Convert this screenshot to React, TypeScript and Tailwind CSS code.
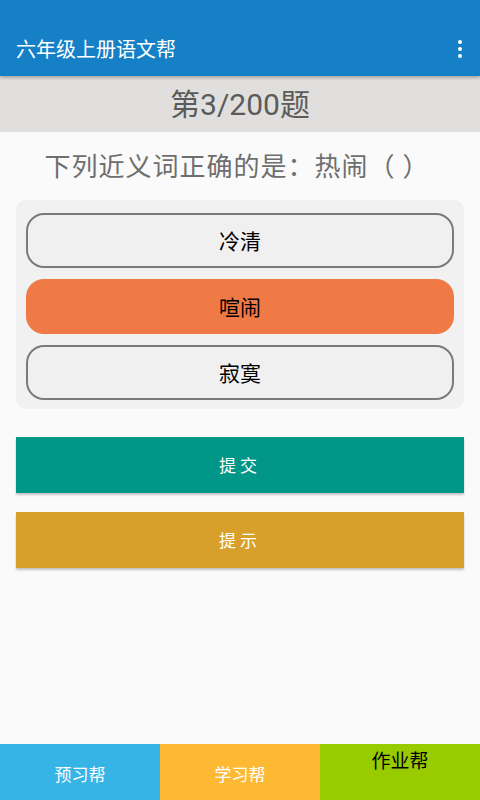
import React from 'react';

const options = ['冷清', '喧闹', '寂寞'];

const App: React.FC = () => {
    const selected = 1;

    return (
        <div
            className="w-[480px] h-[800px] flex flex-col bg-[#fafafa] overflow-hidden"
            style={{ fontFamily: '"Noto Sans CJK SC", Roboto, sans-serif' }}
        >
            {/* App bar */}
            <div className="h-[76px] bg-[#1580c6] flex items-end shadow-[0_2px_3px_rgba(0,0,0,0.25)] relative z-10">
                <div className="h-[50px] w-full flex items-center justify-between pl-4 pr-3 pb-1">
                    <span className="text-white text-[20px]">六年级上册语文帮</span>
                    <div className="flex flex-col gap-[3px] items-center w-4">
                        <span className="w-[4px] h-[4px] rounded-full bg-white" />
                        <span className="w-[4px] h-[4px] rounded-full bg-white" />
                        <span className="w-[4px] h-[4px] rounded-full bg-white" />
                    </div>
                </div>
            </div>

            {/* Question counter */}
            <div className="h-[56px] bg-[#e0dfdd] flex items-center justify-center">
                <span className="text-[30px] text-[#5b5b5b]" style={{ fontFamily: 'Roboto, "Noto Sans CJK SC", sans-serif' }}>
                    第3/200题
                </span>
            </div>

            <div className="flex-1 flex flex-col px-4">
                <div className="h-[68px] flex items-center justify-center pr-[6px] pb-[4px]">
                    <span className="text-[26px] tracking-[1px] text-[#6e6e6e]">下列近义词正确的是：热闹（ ）</span>
                </div>

                {/* Options */}
                <div className="bg-[#f1f1f1] rounded-[10px] px-[10px] pt-[13px] pb-[9px] flex flex-col gap-[11px]">
                    {options.map((opt, i) => (
                        <button
                            key={opt}
                            className={`h-[55px] rounded-[18px] flex items-center justify-center text-[21px] text-black ${i === selected ? 'bg-[#ef7a45]' : 'bg-[#f0f0f0] border-2 border-[#7a7a7a]'}`}
                        >
                            {opt}
                        </button>
                    ))}
                </div>

                <button className="mt-[28px] h-[56px] bg-[#009688] text-white text-[17px] tracking-[4px] shadow-[0_2px_2px_rgba(0,0,0,0.22)]">
                    提交
                </button>
                <button className="mt-[19px] h-[56px] bg-[#d99f2b] text-white text-[17px] tracking-[4px] shadow-[0_2px_2px_rgba(0,0,0,0.22)]">
                    提示
                </button>
            </div>

            {/* Bottom nav */}
            <div className="h-[56px] grid grid-cols-3">
                <div className="bg-[#35b4e5] flex items-center justify-center pt-1 text-white text-[17px]">预习帮</div>
                <div className="bg-[#fdb933] flex items-center justify-center pt-1 text-white text-[17px]">学习帮</div>
                <div className="bg-[#99cc00] flex justify-center pt-[2px] text-black text-[19px]">作业帮</div>
            </div>
        </div>
    );
};

export default App;
